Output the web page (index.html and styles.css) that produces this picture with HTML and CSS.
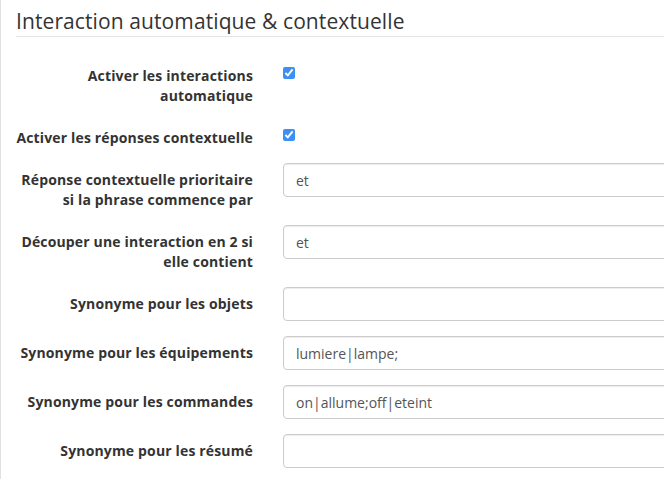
FILE: index.html
```html
<!DOCTYPE html>
<html lang="fr">
<head>
<meta charset="utf-8">
<title>Interaction automatique &amp; contextuelle</title>
<link rel="stylesheet" href="styles.css">
</head>
<body>
<div class="page">
  <fieldset class="panel">
    <legend class="legend">Interaction automatique &amp; contextuelle</legend>
    <div class="form-group">
      <label class="control-label">Activer les interactions<br>automatique</label>
      <div class="control-check"><span class="check"><input type="checkbox" checked></span></div>
    </div>
    <div class="form-group">
      <label class="control-label">Activer les réponses contextuelle</label>
      <div class="control-check"><span class="check"><input type="checkbox" checked></span></div>
    </div>
    <div class="form-group">
      <label class="control-label">Réponse contextuelle prioritaire<br>si la phrase commence par</label>
      <div class="control"><input class="form-control" type="text" value="et"></div>
    </div>
    <div class="form-group">
      <label class="control-label">Découper une interaction en 2 si<br>elle contient</label>
      <div class="control"><input class="form-control" type="text" value="et"></div>
    </div>
    <div class="form-group">
      <label class="control-label">Synonyme pour les objets</label>
      <div class="control"><input class="form-control" type="text" value=""></div>
    </div>
    <div class="form-group">
      <label class="control-label">Synonyme pour les équipements</label>
      <div class="control"><input class="form-control" type="text" value="lumiere|lampe;"></div>
    </div>
    <div class="form-group">
      <label class="control-label">Synonyme pour les commandes</label>
      <div class="control"><input class="form-control" type="text" value="on|allume;off|eteint"></div>
    </div>
    <div class="form-group">
      <label class="control-label">Synonyme pour les résumé</label>
      <div class="control"><input class="form-control" type="text" value=""></div>
    </div>
  </fieldset>
</div>
</body>
</html>
```
FILE: styles.css
```css
html, body {
  margin: 0;
  padding: 0;
  background: #fff;
  overflow: hidden;
}
body {
  font-family: "Open Sans", "Noto Sans", "Liberation Sans", sans-serif;
  font-size: 14px;
  line-height: 20px;
  color: #333;
}
.page {
  width: 900px;
  min-height: 479px;
  border-left: 1px solid #e0e0e0;
  padding: 6px 0 0 15px;
  box-sizing: border-box;
}
.panel {
  border: 0;
  margin: 0;
  padding: 0;
  min-width: 0;
}
.legend {
  display: block;
  width: 100%;
  padding: 0;
  margin: 0 0 22px 0;
  font-size: 21px;
  line-height: 30px;
  letter-spacing: 0.1px;
  color: #333;
  border-bottom: 1px solid #e5e5e5;
}
.form-group {
  display: grid;
  grid-template-columns: 237px 1fr;
  column-gap: 30px;
  margin-bottom: 15px;
}
.control-label {
  text-align: right;
  font-weight: 700;
  padding-top: 7px;
  line-height: 20px;
  letter-spacing: 0.15px;
  color: #333;
}
.control {
  min-height: 34px;
}
.check {
  display: block;
  padding-top: 8px;
}
.check input {
  margin: 0;
  width: 12px;
  height: 12px;
  accent-color: #3d8ff6;
  display: block;
}
.form-control {
  display: block;
  box-sizing: border-box;
  width: 560px;
  height: 34px;
  padding: 6px 12px;
  margin: 0;
  font-family: "Open Sans", "Noto Sans", "Liberation Sans", sans-serif;
  font-size: 14px;
  line-height: 20px;
  color: #555;
  background: #fff;
  border: 1px solid #ccc;
  border-radius: 4px;
  box-shadow: inset 0 1px 1px rgba(0,0,0,0.075);
}
```
